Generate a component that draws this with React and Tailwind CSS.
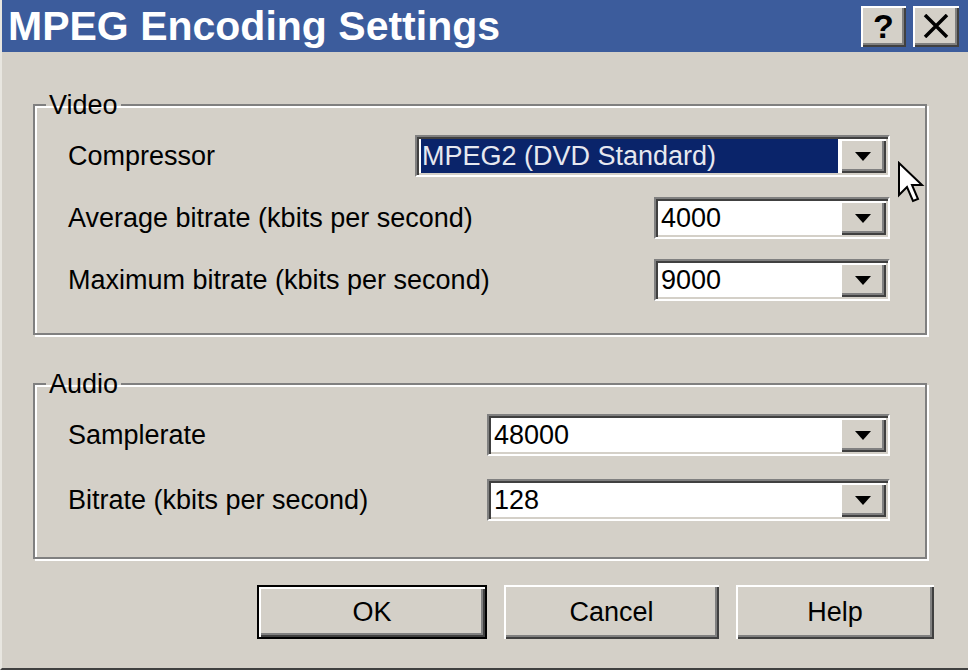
const font = { fontFamily: '"Liberation Sans", Arial, sans-serif' };

function Arrow() {
  return (
    <svg width="16" height="9" viewBox="0 0 16 9">
      <path d="M0 0 H16 L8 9 Z" fill="#000" />
    </svg>
  );
}

function Combo({ value, width, selected }) {
  return (
    <div
      className={`${width} h-[42px] flex border-2 border-t-[#808080] border-l-[#808080] border-r-white border-b-white bg-white shadow-[inset_2px_2px_0_#404040,inset_-2px_-2px_0_#d4d0c8] p-[2px]`}
    >
      <div className="flex-1 flex items-center pl-[2px]">
        {selected ? (
          <div className="h-full flex-1 mr-[2px] bg-[#0a246a] flex items-center pl-[1px] text-[27px] text-[#e6e8f0]">
            {value}
          </div>
        ) : (
          <span className="text-[27px] text-black pl-[1px]">{value}</span>
        )}
      </div>
      <div className="w-[46px] h-full bg-[#d4d0c8] flex items-center justify-center shadow-[inset_2px_2px_0_#ffffff,inset_-2px_-2px_0_#404040,inset_-4px_-4px_0_#808080]">
        <Arrow />
      </div>
    </div>
  );
}

function Row({ label, children }) {
  return (
    <div className="flex items-center h-[42px]">
      <span className="text-[27px] text-black">{label}</span>
      <div className="ml-auto">{children}</div>
    </div>
  );
}

function Group({ title, className, children }) {
  return (
    <fieldset
      className={`border-2 border-[#808080] shadow-[inset_2px_2px_0_#ffffff,2px_2px_0_#ffffff] pl-[33px] pr-[35px] ${className}`}
    >
      <legend className="ml-[-22px] px-[3px] text-[27px] leading-[30px] text-black">{title}</legend>
      {children}
    </fieldset>
  );
}

function Button({ label, width, isDefault }) {
  return (
    <div
      className={`${width} shrink-0 h-[54px] flex items-center justify-center text-[27px] text-black bg-[#d4d0c8] ${
        isDefault
          ? 'border-2 border-black shadow-[inset_2px_2px_0_#ffffff,inset_-2px_-2px_0_#404040,inset_-4px_-4px_0_#808080]'
          : 'shadow-[inset_2px_2px_0_#ffffff,inset_-2px_-2px_0_#404040,inset_-4px_-4px_0_#808080]'
      }`}
    >
      {label}
    </div>
  );
}

export default function App() {
  return (
    <div style={font} className="relative w-[968px] h-[670px] bg-[#d4d0c8] flex flex-col overflow-hidden border-l-2 border-l-[#e8e6e0] border-b-2 border-b-[#404040]">
      {/* title bar */}
      <div className="h-[52px] bg-[#3c5c9c] flex items-center pl-[6px] pr-[9px]">
        <span className="text-white font-bold text-[41px] leading-none">
          MPEG Encoding Settings
        </span>
        <div className="ml-auto flex gap-[7px]">
          <div className="w-[45px] h-[41px] bg-[#d4d0c8] flex items-center justify-center text-black font-bold text-[34px] leading-none shadow-[inset_2px_2px_0_#ffffff,inset_-2px_-2px_0_#404040,inset_-4px_-4px_0_#808080]">
            ?
          </div>
          <div className="w-[46px] h-[41px] bg-[#d4d0c8] flex items-center justify-center shadow-[inset_2px_2px_0_#ffffff,inset_-2px_-2px_0_#404040,inset_-4px_-4px_0_#808080]">
            <svg width="26" height="24" viewBox="0 0 26 24">
              <path d="M2 1 L24 23 M24 1 L2 23" stroke="#000" strokeWidth="3.5" />
            </svg>
          </div>
        </div>
      </div>

      {/* body */}
      <div className="flex-1 flex flex-col pl-[31px] pr-[41px]">
        <Group title="Video" className="mt-[38px] pt-[15px] pb-[32px]">
          <div className="flex flex-col gap-[20px]">
            <Row label="Compressor">
              <Combo value="MPEG2 (DVD Standard)" width="w-[475px]" selected />
            </Row>
            <Row label="Average bitrate (kbits per second)">
              <Combo value="4000" width="w-[236px]" />
            </Row>
            <Row label="Maximum bitrate (kbits per second)">
              <Combo value="9000" width="w-[236px]" />
            </Row>
          </div>
        </Group>

        <Group title="Audio" className="mt-[34px] pt-[15px] pb-[36px]">
          <div className="flex flex-col gap-[23px]">
            <Row label="Samplerate">
              <Combo value="48000" width="w-[403px]" />
            </Row>
            <Row label="Bitrate (kbits per second)">
              <Combo value="128" width="w-[403px]" />
            </Row>
          </div>
        </Group>

        <div className="mt-[26px] flex gap-[17px] ml-[224px]">
          <Button label="OK" width="w-[230px]" isDefault />
          <Button label="Cancel" width="w-[215px]" />
          <Button label="Help" width="w-[198px]" />
        </div>
      </div>

      {/* mouse pointer */}
      <svg className="absolute left-[895px] top-[161px]" width="28" height="46" viewBox="0 0 14 23">
        <path
          d="M1 1 L1 17 L5 13 L8 20 L10.5 19 L7.5 12 L12.5 12 Z"
          fill="#fff"
          stroke="#000"
          strokeWidth="1"
          strokeLinejoin="miter"
        />
      </svg>
    </div>
  );
}
